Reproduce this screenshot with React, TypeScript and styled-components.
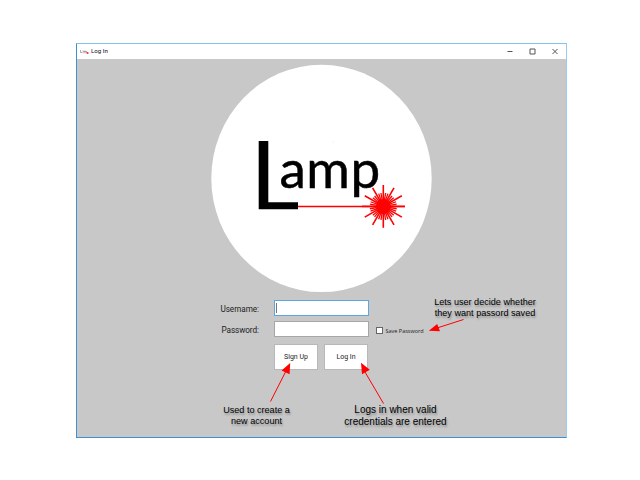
import React from "react";
import styled, { createGlobalStyle } from "styled-components";

const GlobalStyle = createGlobalStyle`
  * { box-sizing: border-box; }
  body { margin: 0; background: #fff; }
`;

const Desktop = styled.main`
  position: relative;
  width: 640px;
  height: 480px;
  padding: 43px 73px 42px 76px;
  overflow: hidden;
  background: #fff;
  font-family: "Liberation Sans", Arial, sans-serif;
  color: #222;
`;

const Window = styled.section`
  display: flex;
  flex-direction: column;
  width: 491px;
  height: 395px;
  border: 1px solid #3b91d3;
  border-top-color: #83c3ef;
  border-right-color: #9ccbef;
  background: #c8c8c8;
`;

const TitleBar = styled.header`
  display: flex;
  flex: none;
  align-items: center;
  height: 15px;
  padding-left: 3px;
  background: #fff;
`;

const Title = styled.h1`
  flex: 1;
  margin: 0 0 0 2px;
  font: 400 6.2px/15px Roboto, sans-serif;
  color: #15101c;
`;

const WindowControls = styled.svg`
  width: 66px;
  height: 15px;
  fill: none;
  stroke: #555;
`;

const Body = styled.div`
  display: flex;
  flex: 1;
  flex-direction: column;
  padding: 5px 0 0 134px;
`;

const Logo = styled.svg`
  display: block;
  flex: none;
  width: 222px;
  height: 230px;
`;

const Form = styled.form`
  display: flex;
  flex-direction: column;
  gap: 5px;
  padding-top: 6px;
`;

const Field = styled.div`
  display: flex;
  align-items: center;
  height: 16px;
`;

const Label = styled.label<{ $indent: number }>`
  width: 63px;
  padding: 2px 0 0 ${(p) => p.$indent}px;
  font: 400 8.2px/16px Roboto, sans-serif;
  letter-spacing: -0.08px;
  white-space: nowrap;
`;

const Input = styled.input<{ $active?: boolean }>`
  width: 95px;
  height: 16px;
  padding: 0 2px;
  border: 1px solid ${(p) => (p.$active ? "#5ba7de" : "#a6a6a6")};
  border-radius: 0;
  outline: none;
  background: ${(p) =>
    p.$active ? "linear-gradient(#777, #777) 1px 2px / 1px 10px no-repeat #fff" : "#fff"};
  font-size: 8px;
`;

const SaveOption = styled.label`
  display: flex;
  align-items: center;
  gap: 2.5px;
  margin: 3px 0 0 7px;
  font: 400 5.5px/8px "Open Sans", sans-serif;
  white-space: nowrap;
`;

const Checkbox = styled.input`
  appearance: none;
  width: 7px;
  height: 7px;
  margin: 0;
  border: 1px solid #666;
  background: #fff;
`;

const Actions = styled.div`
  display: flex;
  gap: 6px;
  padding: 2px 0 0 63px;
`;

const Button = styled.button`
  width: 44px;
  height: 26px;
  padding: 0;
  border: 1px solid #b8b8b8;
  background: #fff;
  font: 400 7px/24px Roboto, sans-serif;
  color: #222;
`;

const Note = styled.p<{ $x: number; $y: number; $w: number; $size: number; $leading: number }>`
  position: absolute;
  left: ${(p) => p.$x}px;
  top: ${(p) => p.$y}px;
  width: ${(p) => p.$w}px;
  margin: 0;
  font-size: ${(p) => p.$size}px;
  line-height: ${(p) => p.$leading}px;
  text-align: center;
  white-space: nowrap;
  color: #000;
  text-shadow: 1px 2px 2px rgba(0, 0, 0, 0.3);
`;

const Arrows = styled.svg`
  position: absolute;
  inset: 0;
  width: 640px;
  height: 480px;
  pointer-events: none;
  stroke: #f00;
  fill: #f00;
`;

const rays = Array.from({ length: 36 }, (_, i) => {
  const angle = (i * Math.PI) / 18;
  const length = i % 3 === 0 ? 21.4 : 13.6;
  return { x: 383.3 + Math.cos(angle) * length, y: 206.4 + Math.sin(angle) * length, long: i % 3 === 0 };
});

function LampLogo() {
  return (
    <Logo viewBox="211 64 222 230" role="img" aria-label="Lamp">
      <ellipse cx="321.5" cy="178.4" rx="110.2" ry="113.7" fill="#fff" />
      <path d="M258.7 141h9.6v61.2H298v7.1h-39.3z" fill="#000" />
      <g fontFamily="Lato, sans-serif" fontSize="53" stroke="#000" strokeWidth=".5">
        <text x="279.6" y="188.4">a</text>
        <text x="306.2" y="188.4">m</text>
        <text x="350.6" y="188.4">p</text>
      </g>
      <g stroke="#f00" strokeWidth="1.5">
        <path d="M298 206.4h107" />
        {rays.map((r, i) => (
          <line key={i} x1="383.3" y1="206.4" x2={r.x} y2={r.y} strokeWidth={r.long ? 1.6 : 1.3} />
        ))}
      </g>
      <circle cx="383.3" cy="206.4" r="7.5" fill="#f00" />
      <circle cx="333" cy="142" r=".5" fill="#ddd" />
    </Logo>
  );
}

export default function App() {
  return (
    <>
      <GlobalStyle />
      <Desktop>
        <Window>
          <TitleBar>
            <svg width="9" height="7" viewBox="0 0 9 7" fill="none">
              <path d="M.5 2v2.5h2M2.5 3h1.2v1.5M4.5 4.5V3h1v1.5M6.5 3v2" stroke="#888" strokeWidth=".7" />
              <path d="M3 5h4" stroke="#f99" strokeWidth=".5" />
              <circle cx="7.6" cy="5" r="1" fill="#e8304a" />
            </svg>
            <Title>Log In</Title>
            <WindowControls viewBox="0 0 66 15">
              <path d="M7.5 7.5h5M30 5h5v5h-5zM52.5 5l5 5M57.5 5l-5 5" />
            </WindowControls>
          </TitleBar>
          <Body>
            <LampLogo />
            <Form onSubmit={(e) => e.preventDefault()}>
              <Field>
                <Label htmlFor="username" $indent={9.5}>Username:</Label>
                <Input id="username" $active />
              </Field>
              <Field>
                <Label htmlFor="password" $indent={10.5}>Password:</Label>
                <Input id="password" type="password" />
                <SaveOption>
                  <Checkbox type="checkbox" />
                  Save Password
                </SaveOption>
              </Field>
              <Actions>
                <Button type="button">Sign Up</Button>
                <Button type="submit">Log In</Button>
              </Actions>
            </Form>
          </Body>
        </Window>
        <Note $x={430} $y={297} $w={110} $size={9.1} $leading={11}>Lets user decide whether<br />they want passord saved</Note>
        <Note $x={206.5} $y={405} $w={100} $size={9.1} $leading={11}>Used to create a<br />new account</Note>
        <Note $x={340} $y={404} $w={111} $size={10} $leading={12.2}>Logs in when valid<br />credentials are entered</Note>
        <Arrows viewBox="0 0 640 480">
          <path d="M463.5 319.5 437 328M270.5 401.5 286 371M383.5 403.5 365 372" />
          <path d="M428.8 330.7 437.2 324 440 331.3zM290.2 363 289.6 374.3 281.6 370.4zM361 362.8 369.8 369.8 362 374.3z" stroke="none" />
        </Arrows>
      </Desktop>
    </>
  );
}
